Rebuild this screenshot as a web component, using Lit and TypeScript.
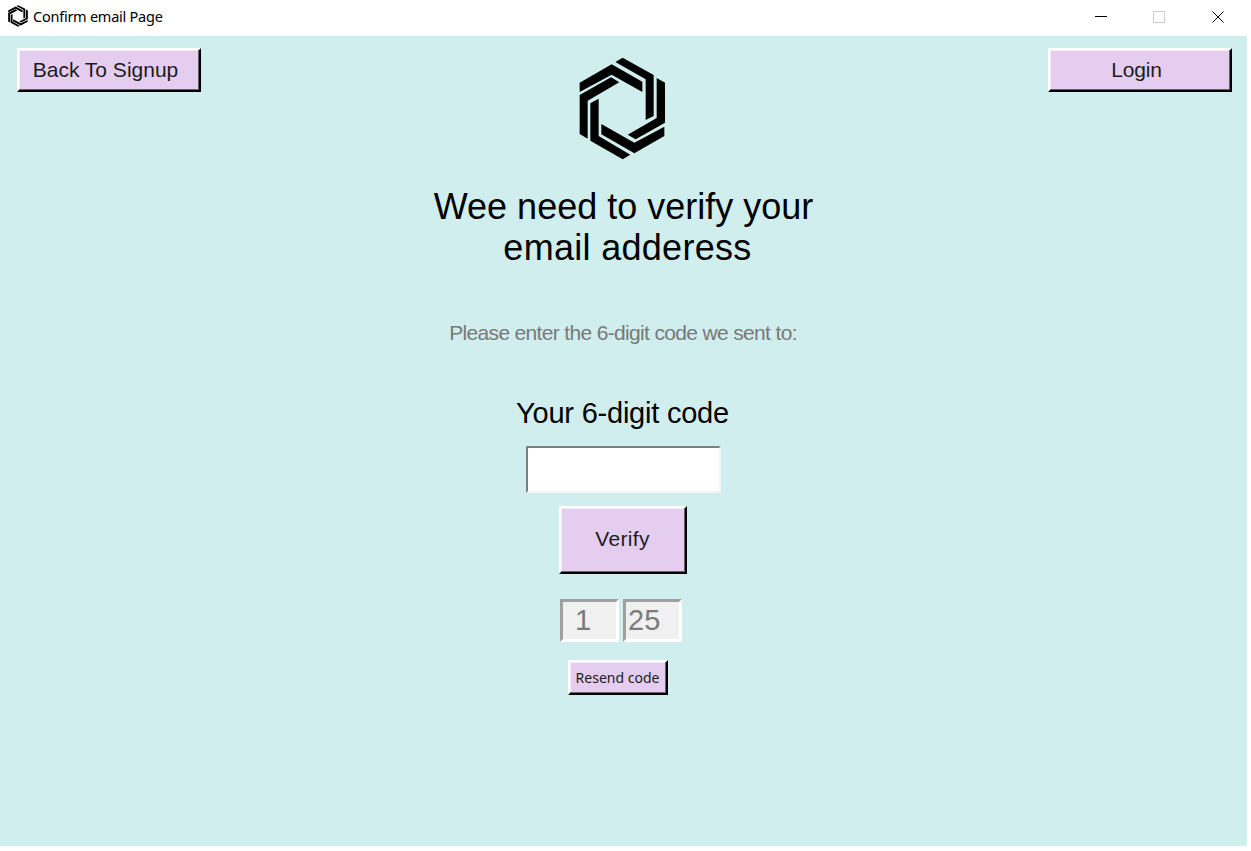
import { LitElement, html, css, svg } from "lit";
import { customElement } from "lit/decorators.js";

const hexMark = svg`
  <path d="M30 98 126 43 218 95V126L126 74 30 126Z"/>
  <path d="M137 36 159 23 252 75V198L228 210V88Z"/>
  <path d="M30 135 124 82 149 97 54 152V266L30 252Z"/>
  <path d="M62 160 87 146V258L182 314 159 328 62 272Z"/>
  <path d="M95 222 194 278 284 230V258L194 310 95 253Z"/>
  <path d="M261 84 286 98V218L198 268 174 254 261 204Z"/>`;

@customElement("app-root")
export class AppRoot extends LitElement {
  static styles = css`
    :host {
      display: flex;
      flex-direction: column;
      height: 851px;
      background: #fff;
      color: #000;
      font-family: "Liberation Sans", Arial, sans-serif;
    }
    * { box-sizing: border-box; }
    .titlebar { height: 36px; display: flex; align-items: flex-start; flex: none; }
    .app-icon { width: 20px; height: 22px; margin: 5px 5px 0 8px; }
    .title {
      font: 14.5px/20px "Noto Sans", sans-serif;
      letter-spacing: -0.25px;
      margin-top: 6px;
      flex: 1;
      white-space: nowrap;
    }
    .controls { width: 175px; height: 36px; margin-right: 4px; flex: none; }
    .client {
      width: 1247px;
      height: 810px;
      background: #d0eeee;
      display: grid;
      grid-template-columns: 184px 1fr 184px;
      padding: 12px 15px 0 17px;
      align-items: start;
    }
    button {
      font: 21px/24px "Liberation Sans", Arial, sans-serif;
      color: #1c1c20;
      background: #e5cdf0;
      border: 2px solid;
      border-color: #fff #000 #000 #fff;
      border-radius: 0;
      padding: 0;
      margin: 0;
      white-space: nowrap;
      box-shadow: inset -1px -1px #6b6070, inset 1px 1px #f5ebf9;
    }
    .nav { width: 184px; height: 44px; }
    .back { letter-spacing: 0; padding-right: 7px; }
    .login { padding-right: 7px; letter-spacing: -0.2px; }
    .column { display: flex; flex-direction: column; align-items: center; padding-right: 4px; }
    .logo { width: 87px; height: 103px; margin: 9px 0 0 0; display: block; }
    h1 {
      font-weight: 400;
      font-size: 36px;
      line-height: 41px;
      margin: 26px 0 0 2px;
      text-align: center;
    }
    .second { display: block; padding-left: 8px; letter-spacing: 0.3px; }
    .hint { font-size: 21px; line-height: 24px; letter-spacing: -0.66px; color: #797979; margin: 53px 0 0 1px; }
    label { font-size: 29px; line-height: 34px; letter-spacing: -0.22px; margin-top: 51px; }
    .entry {
      width: 195px;
      height: 47px;
      margin: 16px 0 0 1px;
      border: 2px solid;
      border-color: #7d7d7d #f4f4f4 #f4f4f4 #7d7d7d;
      border-radius: 0;
      background: #fff;
      padding: 0 4px;
      font: 29px "Liberation Sans", Arial, sans-serif;
      outline: none;
    }
    .verify { width: 128px; height: 68px; margin-top: 13px; letter-spacing: 0.35px; padding-bottom: 2px; }
    .timer { display: flex; gap: 4px; margin: 25px 0 0 -3px; }
    .digits {
      width: 59px;
      height: 43px;
      border: 3px solid;
      border-color: #a0a0a0 #fff #fff #a0a0a0;
      background: #f0f0f0;
      color: #7b7b7b;
      font-size: 29px;
      line-height: 36px;
      padding-left: 2px;
      white-space: pre;
    }
    .minutes { padding-left: 12px; }
    .resend {
      width: 100px;
      height: 35px;
      margin: 18px 0 0 -10px;
      font: 14px/20px "Noto Sans", sans-serif;
    }
  `;

  render() {
    return html`
      <header class="titlebar">
        <svg class="app-icon" viewBox="28 21 260 309" preserveAspectRatio="none">${hexMark}</svg>
        <span class="title">Confirm email Page</span>
        <svg class="controls" viewBox="0 0 175 36" fill="none" shape-rendering="crispEdges">
          <path d="M23 16.5H35" stroke="#000"/>
          <rect x="81.5" y="11.5" width="11" height="11" stroke="#ccc"/>
          <path d="M140.5 11.5 151.5 22.5M151.5 11.5 140.5 22.5" stroke="#000" shape-rendering="auto"/>
        </svg>
      </header>
      <main class="client">
        <button class="nav back">Back To Signup</button>
        <section class="column">
          <svg class="logo" viewBox="28 21 261 309">${hexMark}</svg>
          <h1>Wee need to verify your <span class="second">email adderess</span></h1>
          <p class="hint">Please enter the 6-digit code we sent to:</p>
          <label for="code">Your 6-digit code</label>
          <input id="code" class="entry" />
          <button class="verify">Verify</button>
          <div class="timer">
            <div class="digits minutes">1</div>
            <div class="digits">25</div>
          </div>
          <button class="resend">Resend code</button>
        </section>
        <button class="nav login">Login</button>
      </main>
    `;
  }
}
